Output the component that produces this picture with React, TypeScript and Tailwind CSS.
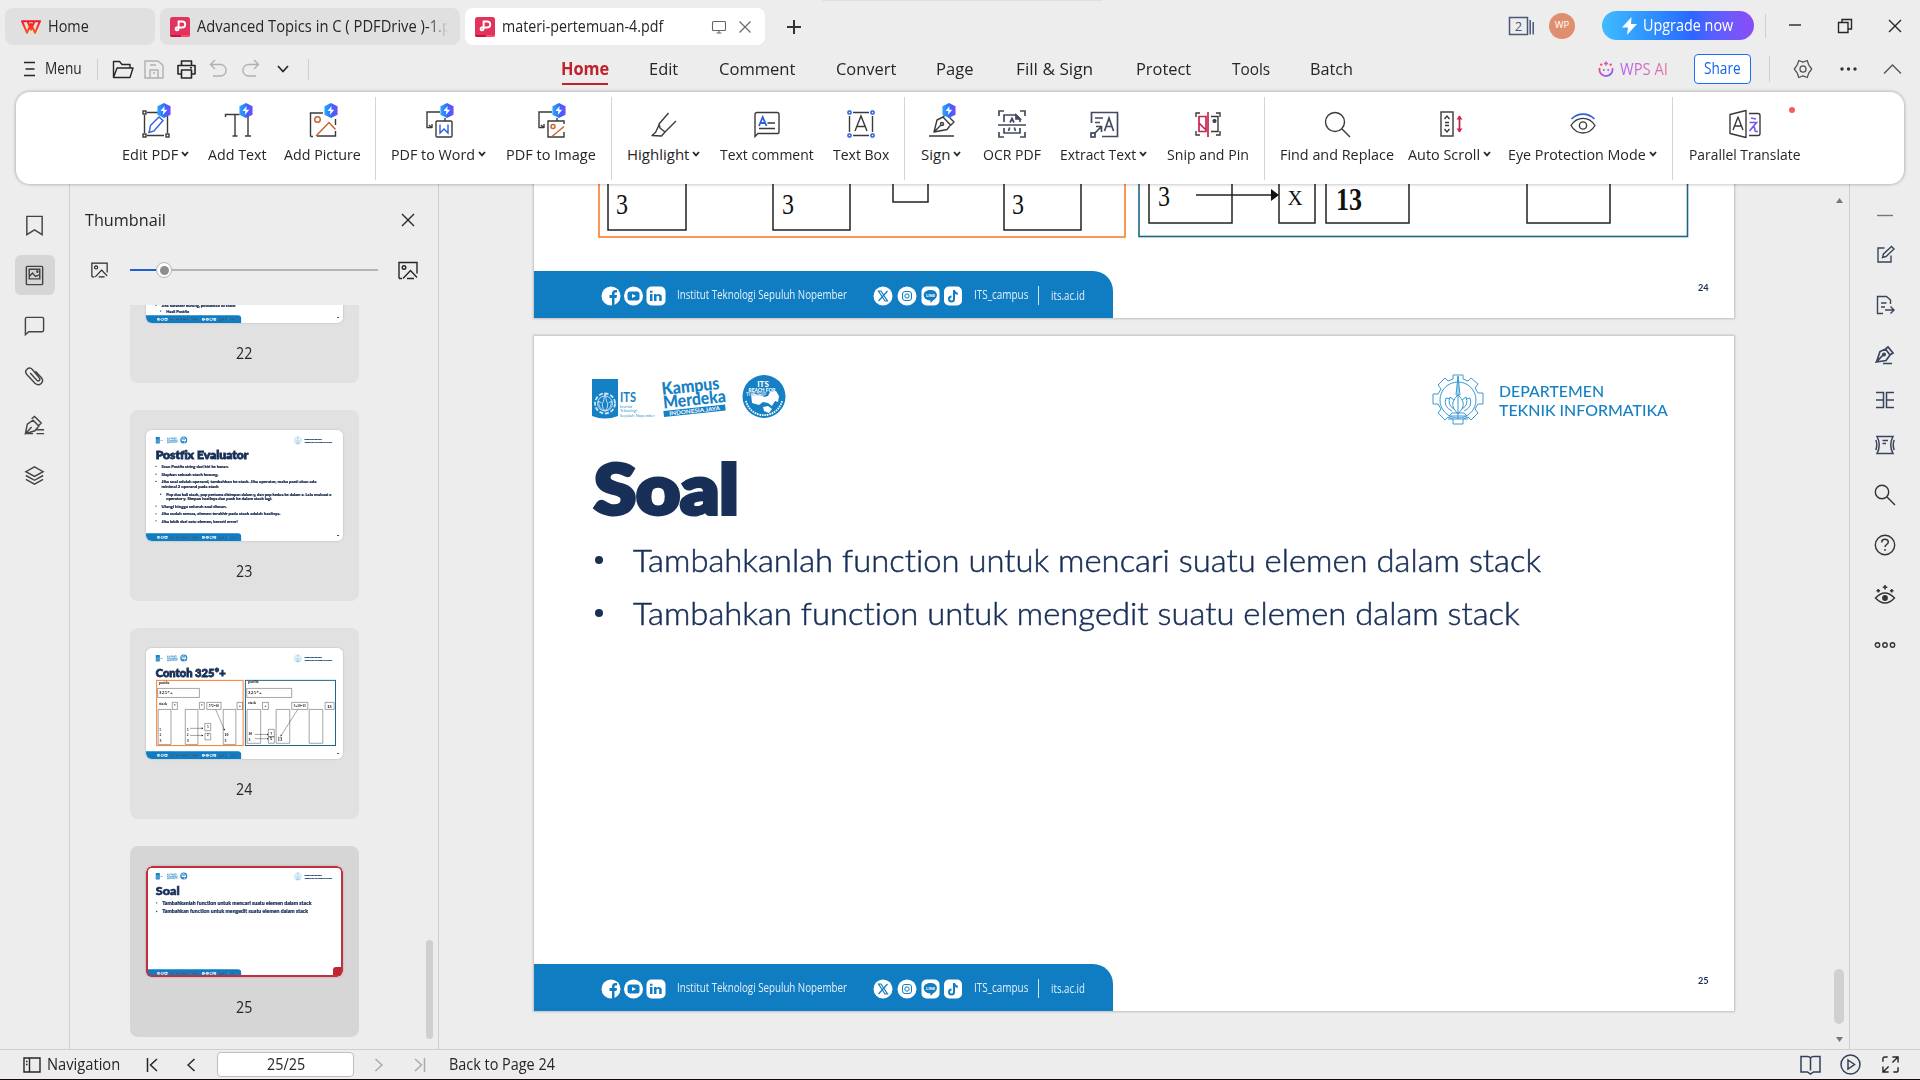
import { useLayoutEffect, useRef, type ReactNode } from 'react';

/* Text squeezed or stretched horizontally to the width given by its class. */
function Fit({ className, ink = '', children }: { className: string; ink?: string; children: ReactNode }) {
  const box = useRef<HTMLSpanElement>(null);
  const glyphs = useRef<HTMLSpanElement>(null);
  useLayoutEffect(() => {
    if (!box.current || !glyphs.current) return;
    const ratio = box.current.offsetWidth / glyphs.current.offsetWidth;
    glyphs.current.style.transform = `scaleX(${ratio})`;
  }, []);
  return (
    <span ref={box} className={`block shrink-0 whitespace-nowrap ${className}`}>
      <span ref={glyphs} className={`inline-block origin-left ${ink}`}>{children}</span>
    </span>
  );
}

function Ico({ children, className = '', box = '0 0 24 24', sw = 1.4 }: { children: ReactNode; className?: string; box?: string; sw?: number }) {
  return (
    <svg viewBox={box} fill="none" stroke="currentColor" strokeWidth={sw} className={`shrink-0 ${className}`}>
      {children}
    </svg>
  );
}

/* ---------- title bar ---------- */

function PdfBadge() {
  return (
    <svg viewBox="0 0 20 20" className="h-5 w-5 shrink-0">
      <rect width="20" height="20" rx="2.5" fill="#e2335c" />
      <path d="M0 18h11v2H2a2 2 0 0 1-2-2z" fill="#c81246" />
      <path d="M11 18h9a2 2 0 0 1-2 2h-7z" fill="#ff4b62" />
      <path d="M8.600 10.500V4.500h3.600a3 3 0 0 1 0 6H6.600a1.500 1.500 0 1 0 2 1.500v-2" fill="none" stroke="#fff" strokeWidth="1.900" />
    </svg>
  );
}

function TitleBar() {
  return (
    <div className="flex h-[52px] shrink-0 items-start pt-2 pl-[5px]">
      <div className="flex h-[37px] w-[150px] items-center rounded-lg bg-[#e0e0e0] pl-4">
        <svg viewBox="0 0 20 14" className="h-[14px] w-5 shrink-0">
          <defs>
            <linearGradient id="wps" x1="0" y1="0" x2="0" y2="1">
              <stop offset="0" stopColor="#f5142b" />
              <stop offset="1" stopColor="#ff5a12" />
            </linearGradient>
          </defs>
          <path d="M5.500 1.200H1L6 12.800 10 4l4 8.800L19 1.200h-5.500L10 9.500 6.500 1.200H13" fill="none" stroke="url(#wps)" strokeWidth="2" strokeLinejoin="round" />
        </svg>
        <Fit className="ml-[7px] w-[41px] text-[15.5px]">Home</Fit>
      </div>
      <div className="ml-[5px] flex h-[37px] w-[300px] items-center rounded-lg bg-[#e0e0e0] pl-[10px]">
        <PdfBadge />
        <div className="ml-[7px] w-[251px] overflow-hidden [mask-image:linear-gradient(to_right,#000_92%,transparent)]">
          <Fit className="w-[268px] text-[15.5px]">Advanced Topics in C ( PDFDrive )-1.pdf</Fit>
        </div>
      </div>
      <div className="ml-[5px] flex h-[37px] w-[300px] items-center rounded-lg bg-white pl-[10px]">
        <PdfBadge />
        <Fit className="ml-[7px] w-[161px] text-[15.5px]">materi-pertemuan-4.pdf</Fit>
        <Ico className="ml-[48px] h-4 w-4 text-[#666]" box="0 0 16 16" sw={1.1}>
          <path d="M2.5 2.5h11a1 1 0 0 1 1 1v7a1 1 0 0 1-1 1h-11a1 1 0 0 1-1-1v-7a1 1 0 0 1 1-1zM5.5 14h5M8 11.5V14" />
        </Ico>
        <Ico className="ml-[12px] h-3 w-3 text-[#666]" box="0 0 12 12" sw={1.1}><path d="M.5.5l11 11M11.5.5l-11 11" /></Ico>
      </div>
      <div className="ml-[21px] flex h-[37px] items-center">
        <Ico className="h-4 w-4 text-[#333]" box="0 0 16 16" sw={2}><path d="M8 1v14M1 8h14" /></Ico>
      </div>
      <div className="ml-auto flex h-[35px] items-center">
        <Ico className="h-5 w-[27px] text-[#4a5878]" box="0 0 27 20" sw={1.5}>
          <path d="M1.5 1.5h18v17h-18zM22.2 4v14.5M25.2 6v12.5" />
          <text x="10.5" y="14.8" fontSize="13" textAnchor="middle" fill="currentColor" stroke="none">2</text>
        </Ico>
        <div className="ml-[14px] flex h-[26px] w-[26px] items-center justify-center rounded-full bg-[#e08e70] text-[9.5px] text-white">WP</div>
        <div className="ml-[27px] flex h-[29px] w-[152px] items-center rounded-full bg-gradient-to-r from-[#40bcff] via-[#2c66ff] via-60% to-[#8a4cf7] pl-[20px] text-white">
          <svg viewBox="0 0 16 18" className="h-[18px] w-[16px]"><path d="M9.5 0L0 10.6h6L5 18 15 7H9z" fill="#fff" /></svg>
          <Fit className="ml-[5px] w-[90px] text-[15.5px]">Upgrade now</Fit>
        </div>
        <div className="ml-[11px] h-6 w-px bg-[#cfcfcf]" />
        <Ico className="ml-[21px] h-4 w-4" box="0 0 16 16"><path d="M2 7h12" /></Ico>
        <Ico className="ml-[34px] h-4 w-4" box="0 0 16 16"><path d="M1.5 4.5h9.500v10h-9.500zM5 4.500V1.500h9.500v9.500H11" /></Ico>
        <Ico className="mr-[18px] ml-[35px] h-[14px] w-[14px]" box="0 0 14 14"><path d="M1 1l12 12M13 1L1 13" /></Ico>
      </div>
    </div>
  );
}

/* ---------- menu row ---------- */

const menus = [
  { label: 'Edit', cls: 'ml-[40px] w-[29px]' },
  { label: 'Comment', cls: 'ml-[41px] w-[76px]' },
  { label: 'Convert', cls: 'ml-[41px] w-[60px]' },
  { label: 'Page', cls: 'ml-[40px] w-[37px]' },
  { label: 'Fill & Sign', cls: 'ml-[43px] w-[77px]' },
  { label: 'Protect', cls: 'ml-[43px] w-[55px]' },
  { label: 'Tools', cls: 'ml-[41px] w-[38px]' },
  { label: 'Batch', cls: 'ml-[40px] w-[43px]' },
];

function MenuRow() {
  return (
    <div className="mb-[6px] flex h-[34px] shrink-0 items-center pl-6">
      <Ico className="h-4 w-3" box="0 0 12 16" sw={1.5}><path d="M0 1.500h11M1.500 8h9M0 14.500h11" /></Ico>
      <Fit className="ml-[9px] w-[37px] text-[15.5px]">Menu</Fit>
      <div className="ml-[15px] h-[21px] w-px bg-[#cfcfcf]" />
      <Ico className="ml-[14px] h-[19px] w-[22px]" box="0 0 22 19"><path d="M1.500 17.500V1.500h6l2.500 3h8v3.500M1.500 17.500l3.500-9.500h16l-3 9.500z" strokeLinejoin="round" /></Ico>
      <Ico className="ml-[10px] h-[19px] w-5 text-[#b0b0b0]" box="0 0 20 19"><path d="M1 1h13l5 4.500V18H1zM6 18v-8h8v8M9 13h2M6 5h6" strokeLinejoin="round" /></Ico>
      <Ico className="ml-[13px] h-[19px] w-[19px]" box="0 0 19 19" sw={1.6}><path d="M4.500 5V1h10v4M4 14H1V5.500h17V14h-3M4.500 10h10v8h-10zM13 7.700h2" strokeLinejoin="round" /></Ico>
      <Ico className="mb-[2px] ml-[13px] h-[18px] w-[19px] text-[#b0b0b0]" box="0 0 19 18"><path d="M6 1L1.500 5.500 6 10M1.500 5.500H12a5.800 5.800 0 0 1 0 11.500H4" /></Ico>
      <Ico className="mb-[2px] ml-[13px] h-[18px] w-[19px] text-[#b0b0b0]" box="0 0 19 18"><path d="M13 1l4.500 4.500L13 10M17.500 5.500H7A5.800 5.800 0 0 0 7 17h8" /></Ico>
      <Ico className="ml-[17px] h-2 w-3" box="0 0 12 8" sw={1.7}><path d="M1 1l5 5.500L11 1" /></Ico>
      <div className="ml-[19px] h-[21px] w-px bg-[#cfcfcf]" />
      <div className="ml-[252px] flex h-[32px] flex-col items-center pt-[4px] font-bold text-[#c0202e]">
        <Fit className="w-[48px] text-[17px] leading-6">Home</Fit>
        <div className="mt-[2px] h-[2px] w-[46px] shrink-0 bg-[#c0202e]" />
      </div>
      {menus.map((m) => (
        <Fit key={m.label} className={`text-[17px] ${m.cls}`}>{m.label}</Fit>
      ))}
      <div className="ml-auto flex items-center">
        <svg viewBox="0 0 16 17" className="h-[17px] w-4" fill="none">
          <defs>
            <linearGradient id="ai" x1="0" y1="0" x2="1" y2="1">
              <stop offset="0" stopColor="#f0495e" />
              <stop offset=".5" stopColor="#b659e8" />
              <stop offset="1" stopColor="#6c5cf0" />
            </linearGradient>
          </defs>
          <path d="M1.700 7a6.500 6.500 0 1 0 12.600 0" stroke="url(#ai)" strokeWidth="1.800" />
          <path d="M5.800 8v2M10.200 8v2M8 .5v4M6 2.500h4" stroke="#c657cf" strokeWidth="1.500" />
          <circle cx="3.200" cy="3.600" r="1.200" fill="#f0495e" />
          <circle cx="12.600" cy="3.600" r="1.200" fill="#f0495e" />
        </svg>
        <Fit className="ml-[6px] w-[48px] text-[16px]" ink="bg-gradient-to-r from-[#b35ff0] to-[#ee6aa0] bg-clip-text text-transparent">WPS AI</Fit>
        <div className="ml-[26px] flex h-[30px] w-[57px] items-center justify-center rounded border border-[#1a6dff] bg-white text-[#1463f3]">
          <Fit className="w-[37px] text-[15.5px]">Share</Fit>
        </div>
        <div className="ml-[18px] h-[26px] w-px bg-[#cfcfcf]" />
        <Ico className="ml-[23px] h-5 w-5 text-[#555]" box="0 0 20 20" sw={1.3}>
          <path d="M5.800 1.500L10 3.200l4.200-1.700 1.500 4.300 3 4.200-3 4.200-1.500 4.300L10 16.800l-4.200 1.700-1.500-4.300-3-4.200 3-4.200z" strokeLinejoin="round" />
          <ellipse cx="10" cy="10" rx="3" ry="3.200" />
        </Ico>
        <svg viewBox="0 0 17 4" className="ml-[27px] h-1 w-[17px]" fill="#333"><circle cx="2" cy="2" r="1.700" /><circle cx="8.500" cy="2" r="1.700" /><circle cx="15" cy="2" r="1.700" /></svg>
        <Ico className="mr-[18px] ml-[26px] h-[10px] w-[19px] text-[#555]" box="0 0 19 10"><path d="M1 9.500L9.500 1 18 9.500" /></Ico>
      </div>
    </div>
  );
}

/* ---------- ribbon ---------- */

const orange = '#c9602a';
const blue = '#2f5fe0';

function FlashBadge() {
  return (
    <svg viewBox="0 0 16 16" className="absolute -top-[7px] left-[14px] h-[15px] w-4">
      <defs>
        <linearGradient id="hex" x1="0" y1="0" x2="1" y2="0">
          <stop offset="0" stopColor="#2ba6ff" />
          <stop offset=".6" stopColor="#3466ff" />
          <stop offset="1" stopColor="#8148f5" />
        </linearGradient>
      </defs>
      <path d="M8 0l7 3.500v9L8 16l-7-3.500v-9z" fill="url(#hex)" />
      <path d="M8.600 3.200L4.300 8.600h3l-.6 4.200 4.800-5.600H8.300z" fill="#fff" />
    </svg>
  );
}

type Tool = { label: string; cls: string; icon: ReactNode; menu?: boolean; flash?: boolean };

const groups: { sep: string; tools: Tool[] }[] = [
  {
    sep: 'ml-[14px]',
    tools: [
      {
        label: 'Edit PDF', cls: 'ml-[106px] w-[56px]', menu: true, flash: true,
        icon: <><path d="M5 2.500h15M5 25.500h17M2.500 5v18M25.500 5v18" /><rect x="1" y="1" width="3" height="3" /><rect x="1" y="24" width="3" height="3" /><rect x="24" y="24" width="3" height="3" /><path d="M8.500 15.500L17 7l4 3.500-9 10.500-5 1.500z" stroke={blue} /></>,
      },
      {
        label: 'Add Text', cls: 'ml-[19px] w-[59px]', flash: true,
        icon: <path d="M1.500 7V4.500h14M11 4.500V26M8.500 26h5M24 6v20M21 26h6" />,
      },
      {
        label: 'Add Picture', cls: 'ml-[17px] w-[77px]', flash: true,
        icon: <><path d="M14 3H1.500v23.500M8 26h18.500v-5M26.500 15V9M1.500 26.500H4" /><circle cx="8.500" cy="9.500" r="2.800" stroke={orange} /><path d="M7 26L20 12.500l6.500 7" stroke={orange} /></>,
      },
    ],
  },
  {
    sep: 'ml-[15px]',
    tools: [
      {
        label: 'PDF to Word', cls: 'ml-[15px] w-[84px]', menu: true, flash: true,
        icon: <><path d="M15 2H2v15.500h4M20 8v3M4 15l3 3M7 14v4" /><rect x="11" y="11" width="16" height="16" rx="1" /><path d="M15 14.500V23l4-4 4 4v-8.500" stroke={blue} /></>,
      },
      {
        label: 'PDF to Image', cls: 'ml-[20px] w-[90px]', flash: true,
        icon: <><path d="M15 2H2v15.500h4M20 8v3M4 15l3 3M7 14v4M27 22v5H11V11h16v3" /><circle cx="16" cy="16.500" r="2" stroke={orange} /><path d="M15 26.500L27 16.500" stroke={orange} /></>,
      },
    ],
  },
  {
    sep: 'ml-[15px]',
    tools: [
      {
        label: 'Highlight', cls: 'ml-[15px] w-[62px]', menu: true,
        icon: <path d="M18.500 3L9 14l1 4 5 4L26 11M9 15l-3.500 7.500L2 25.500l9.500.5 3.500-4" strokeLinejoin="round" />,
      },
      {
        label: 'Text comment', cls: 'ml-[20px] w-[94px]',
        icon: <><path d="M2 26.500V4.500a2 2 0 0 1 2-2h20a2 2 0 0 1 2 2v18a1 1 0 0 1-1 1H5zM14.500 13H22M6 18.500h16" /><path d="M6 16L9.700 7 13.500 16M7.300 13h5" stroke={blue} strokeWidth="1.800" /></>,
      },
      {
        label: 'Text Box', cls: 'ml-[19px] w-[56px]',
        icon: <><path d="M6 2.500h16M6 25.500h16M2.500 6v16M25.500 6v16M8 21l6-15 6 15M10 16.500h8" /><g stroke={blue} strokeWidth="1.600"><rect x="1" y="1" width="3" height="3" rx="1" /><rect x="24" y="1" width="3" height="3" rx="1" /><rect x="1" y="24" width="3" height="3" rx="1" /><rect x="24" y="24" width="3" height="3" rx="1" /></g></>,
      },
    ],
  },
  {
    sep: 'ml-[15px]',
    tools: [
      {
        label: 'Sign', cls: 'ml-[16px] w-[29px]', menu: true, flash: true,
        icon: <><path d="M2 26h25M7 22l3-12 6-3 7.500 8-3.500 4.500L7 22l7-7M16 7l3-3 8 8-3 3" strokeLinejoin="round" /><circle cx="15" cy="14" r="1.500" /></>,
      },
      {
        label: 'OCR PDF', cls: 'ml-[22px] w-[58px]',
        icon: <g stroke="#414a61" strokeWidth="1.700"><path d="M1 6V1h5M22 1h5v5M27 22v5h-5M6 27H1v-5M0 15h28M6 12V5h12l4 4v3M6 18v5h16v-5M10.500 21l1.200-3.500M17.500 21l-1.200-3.500M12 12.500l2-4 2 4" /><path d="M18 5v4h4z" fill="#414a61" /></g>,
      },
      {
        label: 'Extract Text', cls: 'ml-[19px] w-[76px]', menu: true,
        icon: <g stroke="#414a61" strokeWidth="1.700"><path d="M1.500 13V2.500h26v24H12M5 8h8M5 12.500h5M14.500 21l4.500-13 4.500 13M16 16.500h6M4 24l7-7M6 16.500h5.500V22" /><rect x="1" y="23" width="4" height="4" /></g>,
      },
      {
        label: 'Snip and Pin', cls: 'ml-[20px] w-[82px]',
        icon: <><path d="M2 7V3h4M22 3h4v4M26 21v4h-4M6 25H2v-4M17 6.500h7v15h-7" /><circle cx="20.500" cy="11" r="1.400" fill="#555" /><path d="M14 2v25M12 6.500H5v15h7zM5 13l7 7" stroke="#c8254e" strokeWidth="1.700" /></>,
      },
    ],
  },
  {
    sep: 'ml-[15px]',
    tools: [
      {
        label: 'Find and Replace', cls: 'ml-[15px] w-[114px]',
        icon: <><circle cx="12" cy="12" r="9.500" /><path d="M19 19l8 8" /></>,
      },
      {
        label: 'Auto Scroll', cls: 'ml-[14px] w-[72px]', menu: true,
        icon: <><rect x="5" y="2" width="12" height="24" /><path d="M8.500 9L11 6l2.500 3M8.500 19l2.500 3 2.500-3M9 12.500h4M9 15.500h4" /><path d="M23.500 6v16" stroke="#c8254e" strokeWidth="1.800" /><path d="M20.500 9.500l3-4 3 4zM20.500 18.500l3 4 3-4z" fill="#c8254e" stroke="none" /></>,
      },
      {
        label: 'Eye Protection Mode', cls: 'ml-[17px] w-[138px]', menu: true,
        icon: <><path d="M2 15.500C8 6 20 6 26 15.500 20 25.500 8 25.500 2 15.500z" strokeLinejoin="round" /><circle cx="14" cy="15.500" r="3.600" /><path d="M2.500 9C9 2.500 19 2.500 25.500 9" stroke={blue} strokeWidth="1.700" /></>,
      },
    ],
  },
  {
    sep: 'ml-[16px]',
    tools: [
      {
        label: 'Parallel Translate', cls: 'ml-[16px] w-[111px]',
        icon: <><path d="M-1 4.500l16-4v27l-16-4zM18 3.500h9a2 2 0 0 1 2 2v18a2 2 0 0 1-2 2h-9M2 20L7 7l5 13M4 16h6" strokeLinejoin="round" /><path d="M20 8l5 1M18.500 12.500h7l-7 8.500M21.500 17c3-1 2 4 3 4.500h2.500" stroke="#7a55f0" strokeWidth="1.700" /></>,
      },
    ],
  },
];

function Ribbon() {
  return (
    <div className="relative z-10 mx-4 flex h-[92px] shrink-0 items-start rounded-[14px] bg-white shadow-[0_0_3px_1px_rgba(0,0,0,0.22)]">
      {groups.map((g, gi) => (
        <div key={g.sep + g.tools[0].label} className="flex h-full items-start">
          {g.tools.map((t) => {
            const [gap, width] = t.cls.split(' ');
            return (
              <div key={t.label} className={`flex flex-col items-center pt-[18px] ${gap}`}>
                <div className="relative h-7 w-7">
                  <Ico className="h-7 w-7 overflow-visible text-[#3a3a3a]" box="0 0 28 28">{t.icon}</Ico>
                  {t.flash && <FlashBadge />}
                </div>
                <div className="mt-[5px] flex items-center">
                  <Fit className={`text-[15px] leading-[22px] ${width}`}>{t.label}</Fit>
                  {t.menu && <Ico className="ml-[3px] h-[6px] w-2" box="0 0 8 6" sw={1.8}><path d="M1 1l3 3.300L7 1" /></Ico>}
                </div>
              </div>
            );
          })}
          {gi < groups.length - 1 && <div className={`mt-[5px] h-[83px] w-px bg-[#d4d4d4] ${g.sep}`} />}
        </div>
      ))}
      <div className="absolute top-[15px] right-[109px] h-[6px] w-[6px] rounded-full bg-[#f0605e]" />
    </div>
  );
}

/* ---------- slides (1200 x 675) ---------- */

function SlideLogos() {
  return (
    <div className="flex h-[54px] items-start justify-between pr-[66px] pl-[58px]">
      <svg viewBox="0 0 196 54" className="h-[54px] w-[196px]" fontFamily="Lato, sans-serif">
        <path d="M0 7h26v37q-13 5-26 0z" fill="#1580c4" />
        <g stroke="#cfe6f5" fill="none" strokeWidth=".9">
          <circle cx="13" cy="31.500" r="10" strokeDasharray="4 1.800" strokeWidth="1.800" />
          <circle cx="13" cy="31.500" r="7.500" />
          <path d="M13 21l-1.500 8q-3 5 1.500 10 4.500-5 1.500-10zM6.500 29q0 8 6.500 10 6.500-2 6.500-10l-3 2M6.500 29l3 2" />
        </g>
        <g fill="#1580c4">
          <text x="28" y="30" fontSize="13" fontWeight="700" textLength="16" lengthAdjust="spacingAndGlyphs">ITS</text>
          <text x="28" y="35.500" fontSize="4" opacity=".8">Institut</text>
          <text x="28" y="40" fontSize="4" opacity=".8">Teknologi</text>
          <text x="28" y="44.500" fontSize="4" opacity=".8" textLength="35">Sepuluh Nopember</text>
          <g transform="rotate(-6 72 40)" fontWeight="900" fontSize="17.500">
            <text x="72" y="23" textLength="58" lengthAdjust="spacingAndGlyphs">Kampus</text>
            <text x="72" y="36.500" textLength="63" lengthAdjust="spacingAndGlyphs">Merdeka</text>
            <rect x="71.500" y="39" width="62" height="6" />
            <text x="77" y="44" fontSize="5.600" fontWeight="700" fill="#fff" textLength="51" lengthAdjust="spacingAndGlyphs">INDONESIA JAYA</text>
          </g>
          <circle cx="172" cy="24.500" r="21.500" />
        </g>
        <path d="M159 22q3-2 6 1l4-1 3 3 4-1 2-4 6-1 3 5-1 6-3-1-3 5-4-3-5-1-4 3-7-2zM171 35l5-1 4 3-3 4-5-2z" fill="#fff" />
        <path d="M154 29a18.500 18.500 0 0 0 36 0" fill="none" stroke="#fff" strokeWidth="1.800" strokeDasharray="1.600 .9" />
        <g fill="#fff" textAnchor="middle" fontWeight="900">
          <text x="171" y="14.500" fontSize="8">ITS</text>
          <text x="170" y="19.500" fontSize="4.800">REACH FOR</text>
          <text x="164" y="24" fontSize="4.800" stroke="#1580c4" strokeWidth=".2">THE TOP</text>
        </g>
      </svg>
      <div className="flex h-[56px] items-center">
        <svg viewBox="0 0 52 52" className="h-[52px] w-[52px]" fill="none" stroke="#3a9ad4" strokeWidth="1">
          <path d="M21 5V1h10v4l5 2 3-3 7 6-3 4 3 5h5v11h-5l-3 5 3 4-7 7-3-3-5 2v5H21v-5l-5-2-3 3-7-7 3-4-3-5H1V20h5l3-5-3-4 7-7 3 3z" />
          <circle cx="26" cy="26" r="18" />
          <path d="M26 2l-2 19h4zM26 3v42M26 21q-8 7-4 14l4 5 4-5q4-7-4-14zM22 35q-7-4-4-12l4 3M30 35q7-4 4-12l-4 3M20 37q-9-4-6-13l4 1M32 37q9-4 6-13l-4 1M17 42h18l-3-3H20zM16 45h20" />
        </svg>
        <div className="ml-[15px] font-['Lato'] text-[16px] leading-[19.500px] font-medium text-[#1580c4]">
          <Fit className="w-[105px]">DEPARTEMEN</Fit>
          <Fit className="w-[169px]">TEKNIK INFORMATIKA</Fit>
        </div>
      </div>
    </div>
  );
}

function SlideFooter({ page }: { page: number }) {
  return (
    <div className="mt-auto flex h-[47px] shrink-0 items-start">
      <div className="flex h-[47px] w-[579px] items-center rounded-tr-[20px] bg-[#107cc1] pt-[2px] pl-[67px] font-['Open_Sans'] text-[12.500px] text-[#e4f1fa]">
        <svg viewBox="0 0 66 20" className="h-5 w-[66px] shrink-0" fill="#fff">
          <circle cx="10" cy="10" r="9.500" />
          <path d="M11 20v-8H8.500V9H11V7.500Q11 4 14.500 4H16v2.600h-1.500q-1 0-1 1.200V9H16l-.5 3h-2v8" fill="#107cc1" />
          <circle cx="32.500" cy="10" r="9.500" />
          <rect x="26.500" y="5.500" width="12" height="9" rx="2.500" fill="#107cc1" />
          <path d="M31 8l4 2-4 2z" />
          <rect x="45.500" y=".5" width="19" height="19" rx="5" />
          <path d="M49 8h2.500v7H49zM49 4.700h2.500v2H49zM53 8h2.400v1q3-2.500 5.300.7V15h-2.500v-4.500q-1.400-1.700-2.700 0V15H53z" fill="#107cc1" />
        </svg>
        <Fit className="ml-[10px] w-[170px]">Institut Teknologi Sepuluh Nopember</Fit>
        <svg viewBox="0 0 90 20" className="ml-[26px] h-5 w-[90px] shrink-0" fill="#fff">
          <circle cx="10" cy="10" r="9.500" />
          <path d="M5.500 5h2.500l6.500 10H12zM14.500 5l-9 10" fill="none" stroke="#107cc1" strokeWidth="1.200" />
          <circle cx="34" cy="10" r="9.500" />
          <g fill="none" stroke="#107cc1"><rect x="29.500" y="5.500" width="9" height="9" rx="2.500" /><circle cx="34" cy="10" r="2.200" /></g>
          <rect x="48.500" y=".5" width="18" height="19" rx="5" />
          <path d="M57.500 4c8 0 8 8 3 10l-3 3v-2.500c-9-.5-9-10.500 0-10.500z" fill="#107cc1" />
          <text x="57.500" y="11" fontSize="4" fontWeight="700" textAnchor="middle">LINE</text>
          <rect x="71" y=".5" width="18" height="19" rx="5" />
          <path d="M81 4v9a2.500 2.500 0 1 1-2.500-2.500M81 4.500q.8 3 3.800 3.300" fill="none" stroke="#107cc1" strokeWidth="2" />
        </svg>
        <Fit className="ml-[11px] w-[54px]">ITS_campus</Fit>
        <div className="ml-[10px] h-[19px] w-px bg-[#cfe6f5]" />
        <Fit className="mt-[2px] ml-[12px] w-[34px]">its.ac.id</Fit>
      </div>
      <Fit className="mt-[8px] mr-[25px] ml-auto w-[11px] font-['Lato'] text-[10px] leading-4 font-bold text-[#182f57]">{page}</Fit>
    </div>
  );
}

function StackDiagram({ thumb }: { thumb?: boolean }) {
  const frame = thumb ? 6 : 1.6;
  return (
    <svg viewBox="0 0 1200 675" className="absolute inset-0 h-full w-full" fill="none" stroke="#222" strokeWidth={thumb ? 2.5 : 1.5} fontFamily="Liberation Serif, serif">
      <rect x="65" y="197" width="526" height="397" stroke="#fa7d28" strokeWidth={frame} />
      <rect x="605" y="197" width="548.500" height="396.500" stroke="#1f6388" strokeWidth={frame} />
      <path d="M71 246h254v55H71zM74 374h78v213H74zM239 374h77v213h-77zM470 374h77v213h-77zM160 331h31v43h-31zM325 331h30v43h-30zM370 331h87v43h-87zM554 331h34v43h-34zM358 459h36v45h-36zM359 520h35v39h-35z" />
      <path d="M613 246h274v55H613zM615 374h83v206h-83zM792 374h83v206h-83zM993 374h83v206h-83zM709 331h36v43h-36zM887 331h98v43h-98zM1090 331h55v43h-55zM745 495h36v45h-36zM745 540h36v40h-36z" />
      <path d="M268 489h76M268 532h76M424 374l52 122M924 374L824 530M662 526h76M662 552h76" />
      <g fill="#111" stroke="none">
        <path d="M339 483l10 6-10 6zM339 526l10 6-10 6zM481 504l-12-9 10-4zM818 540l2-14 8 5zM737 520l8 6-8 6zM737 546l8 6-8 6z" />
        <g fontSize="30">
          <text x="82" y="503" textLength="11" lengthAdjust="spacingAndGlyphs">5</text>
          <text x="82" y="538" textLength="11" lengthAdjust="spacingAndGlyphs">2</text>
          <text x="82" y="571" textLength="12" lengthAdjust="spacingAndGlyphs">3</text>
          <text x="248" y="503" textLength="11" lengthAdjust="spacingAndGlyphs">5</text>
          <text x="248" y="538" textLength="11" lengthAdjust="spacingAndGlyphs">2</text>
          <text x="248" y="571" textLength="12" lengthAdjust="spacingAndGlyphs">3</text>
          <text x="478" y="538" textLength="24" lengthAdjust="spacingAndGlyphs">10</text>
          <text x="478" y="571" textLength="12" lengthAdjust="spacingAndGlyphs">3</text>
          <text x="623" y="530" textLength="24" lengthAdjust="spacingAndGlyphs">10</text>
          <text x="624" y="563" textLength="12" lengthAdjust="spacingAndGlyphs">3</text>
          <text x="802" y="567" fontSize="32" fontWeight="700" textLength="26" lengthAdjust="spacingAndGlyphs">13</text>
          <text x="79" y="282" textLength="84">325*+</text>
          <text x="621" y="278" textLength="84">325*+</text>
          <text x="1101" y="363" fontWeight="700">13</text>
        </g>
        <g fontSize="22" fontWeight="700">
          <text x="79" y="217">postfix</text>
          <text x="79" y="346">stack</text>
          <text x="621" y="214">postfix</text>
          <text x="621" y="340">stack</text>
        </g>
        <g fontSize="20" textAnchor="middle">
          <text x="175" y="358">*</text>
          <text x="340" y="358">*</text>
          <text x="413" y="358">5*2=10</text>
          <text x="571" y="358">+</text>
          <text x="376" y="489">5</text>
          <text x="376" y="538">2</text>
          <text x="727" y="358">+</text>
          <text x="936" y="358">3+10=13</text>
          <text x="763" y="524">y</text>
          <text x="761" y="562" fontSize="21">X</text>
        </g>
      </g>
    </svg>
  );
}

function Bullet({ children }: { children: ReactNode }) {
  return (
    <div className="flex items-center">
      <div className="mr-[30px] h-2 w-2 shrink-0 rounded-full bg-[#182f57]" />
      {children}
    </div>
  );
}

function Slide({ page, thumb }: { page: number; thumb?: boolean }) {
  return (
    <div className={`relative flex h-[675px] w-[1200px] flex-col bg-white pt-[36px] font-['Lato'] text-[#182f57] [font-variant-ligatures:none] ${thumb ? 'font-bold [-webkit-text-stroke:1.5px_#182f57]' : ''}`}>
      <SlideLogos />
      {page === 25 && (
        <>
          <div className="mt-[20px] pl-[60px] text-[68px] leading-[84px] font-black [-webkit-text-stroke:4px_#182f57]">
            <Fit className="w-[145px]">Soal</Fit>
          </div>
          <div className={`mt-[6px] flex flex-col gap-[5px] pl-[61px] text-[31.500px] leading-[48px] ${thumb ? '' : 'font-light [-webkit-text-stroke:0.500px_#182f57]'}`}>
            <Bullet><Fit className="w-[908px]">Tambahkanlah function untuk mencari suatu elemen dalam stack</Fit></Bullet>
            <Bullet><Fit className="w-[887px]">Tambahkan function untuk mengedit suatu elemen dalam stack</Fit></Bullet>
          </div>
        </>
      )}
      {page === 24 && (
        <>
          <div className="mt-[20px] pl-[59px] text-[66px] leading-[84px] font-black [-webkit-text-stroke:5px_#182f57]">
            <Fit className="w-[426px]">Contoh 325*+</Fit>
          </div>
          <div className="[-webkit-text-stroke:0px]"><StackDiagram thumb={thumb} /></div>
        </>
      )}
      {page === 23 && (
        <>
          <div className="mt-[18px] pl-[59px] text-[66px] leading-[84px] font-black [-webkit-text-stroke:5px_#182f57]">
            <Fit className="w-[564px]">Postfix Evaluator</Fit>
          </div>
          <div className="mt-[14px] flex flex-col pl-[57px] text-[26px] leading-[30px] text-[#101c38]">
            <Bullet><Fit className="w-[408px]">Scan Postfix string dari kiri ke kanan.</Fit></Bullet>
            <div className="mt-[18px]"><Bullet><Fit className="w-[347px]">Siapkan sebuah stack kosong.</Fit></Bullet></div>
            <div className="mt-[14px]"><Bullet><Fit className="w-[942px]">Jika soal adalah operand, tambahkan ke stack. Jika operator, maka pasti akan ada</Fit></Bullet></div>
            <Fit className="ml-[38px] w-[347px]">minimal 2 operand pada stack</Fit>
            <div className="mt-[20px] ml-[28px] text-[24px] leading-[26px]">
              <Bullet><Fit className="w-[1006px]">Pop dua kali stack, pop pertama disimpan dalam y, dan pop kedua ke dalam x. Lalu evaluasi x</Fit></Bullet>
              <Fit className="ml-[38px] w-[646px]">operator y. Simpan hasilnya dan push ke dalam stack lagi.</Fit>
            </div>
            <div className="mt-[18px]"><Bullet><Fit className="w-[396px]">Ulangi hingga seluruh soal discan.</Fit></Bullet></div>
            <div className="mt-[17px]"><Bullet><Fit className="w-[724px]">Jika sudah semua, elemen terakhir pada stack adalah hasilnya.</Fit></Bullet></div>
            <div className="mt-[13px]"><Bullet><Fit className="w-[463px]">Jika lebih dari satu elemen, berarti error!</Fit></Bullet></div>
          </div>
        </>
      )}
      {page === 22 && (
        <div className="mt-auto mb-[10px] flex flex-col gap-[6px] pl-[57px] text-[26px] leading-[30px] text-[#101c38]">
          <Bullet><Fit className="w-[450px]">Jika karakter kurung, pindahkan isi stack</Fit></Bullet>
          <div className="ml-[28px]"><Bullet><Fit className="w-[140px]">Hasil Postfix</Fit></Bullet></div>
        </div>
      )}
      {page === 22 ? <div className="flex flex-col"><SlideFooter page={page} /></div> : <SlideFooter page={page} />}
    </div>
  );
}

/* ---------- left side ---------- */

function LeftRail() {
  const icons: { name: string; art: ReactNode }[] = [
    { name: 'bookmark', art: <path d="M4 2.500h16v19l-8-5-8 5z" /> },
    { name: 'thumbs', art: <><rect x="3.500" y="2.500" width="17" height="19" rx="1" /><path d="M6.500 5.500h11v10h-11zM6.500 13l3.500-3.500 3 3.500 4.500-2" /><circle cx="15" cy="8" r=".6" /></> },
    { name: 'comment', art: <path d="M2.500 21.500V5a1.500 1.500 0 0 1 1.500-1.500h16A1.500 1.500 0 0 1 21.500 5v12a1.500 1.500 0 0 1-1.500 1.500H6z" /> },
    { name: 'clip', art: <path d="M7.500 9.500l7 7.500c1.800 1.800 4.200-.6 2.500-2.500L10 6C6 1.800.5 7 4 11l8.500 9c4.500 4.200 10.500-1.500 6.500-6L13 7.500" /> },
    { name: 'pen', art: <path d="M2.500 20.500h8M2.500 20.500l2-10 6-4 6 6-4 5zM2.500 20.500l6.500-7M9 5l3-2.500 7 7L16.500 12M14 16.500h8M14 20.500h8" /> },
    { name: 'layers', art: <path d="M12 3l9 5-9 5-9-5zM3 12l9 5 9-5M3 16l9 5 9-5" /> },
  ];
  return (
    <div className="flex w-[70px] shrink-0 flex-col items-center gap-[10px] border-r border-[#cfcfcf] pt-[21px]">
      {icons.map((i) => (
        <div key={i.name} className={`flex h-10 w-10 items-center justify-center rounded-md ${i.name === 'thumbs' ? 'bg-[#d6d6d6]' : ''}`}>
          <Ico className="h-[23px] w-[23px] text-[#444]" sw={1.500}>{i.art}</Ico>
        </div>
      ))}
    </div>
  );
}

function PictureIcon({ className }: { className: string }) {
  return (
    <Ico className={className} box="0 0 20 18" sw={1.400}>
      <path d="M1 17V1h18v11M1 17h3M9 17h7M5 17l7.500-8L19 16" />
      <circle cx="6" cy="6" r="1.800" />
    </Ico>
  );
}

function ThumbnailPanel() {
  return (
    <div className="flex w-[369px] shrink-0 flex-col border-r border-[#cfcfcf]">
      <div className="flex h-9 items-center pt-[36px] pl-[15px]">
        <Fit className="w-[81px] text-[17px] leading-6">Thumbnail</Fit>
        <Ico className="mr-[23px] ml-auto h-[14px] w-[14px]" box="0 0 14 14"><path d="M1 1l12 12M13 1L1 13" /></Ico>
      </div>
      <div className="mt-[38px] flex h-[24px] items-center pl-[21px]">
        <PictureIcon className="h-[16px] w-[17px]" />
        <div className="relative ml-[22px] flex w-[248px] items-center">
          <div className="h-[2px] w-[30px] bg-[#1f5fd0]" />
          <div className="h-[2px] flex-1 bg-[#b4b4b4]" />
          <div className="absolute left-[26px] flex h-4 w-4 items-center justify-center rounded-full border border-[#b5b5b5] bg-white">
            <div className="h-[9px] w-[9px] rounded-full bg-[#8d8d8d]" />
          </div>
        </div>
        <PictureIcon className="ml-[20px] h-[19px] w-5" />
      </div>
      <div className="mt-[23px] flex min-h-0 flex-1">
        <div className="ml-[60px] flex w-[229px] flex-col justify-end gap-[27px] overflow-hidden pb-[12px]">
          {[22, 23, 24, 25].map((n) => (
            <div key={n} className={`flex h-[191px] shrink-0 flex-col items-center rounded-lg pt-[20px] ${n === 25 ? 'bg-[#d6d6d6]' : 'bg-[#e1e1e1]'}`}>
              <div className="relative h-[111px] w-[197px] overflow-hidden rounded-md bg-white shadow-[0_0_2px_rgba(0,0,0,0.25)]">
                <div className="h-[675px] w-[1200px] origin-top-left scale-[0.1643]">
                  <Slide page={n} thumb />
                </div>
                {n === 25 && (
                  <div className="absolute inset-0 flex items-end justify-end rounded-md border-2 border-[#c22f3e]">
                    <div className="h-[8px] w-[8px] rounded-tl-[3px] bg-[#c0262f]" />
                  </div>
                )}
              </div>
              <Fit className="mt-[18px] mr-[2px] w-4 text-[16px] leading-6">{n}</Fit>
            </div>
          ))}
        </div>
        <div className="mt-auto mr-[5px] mb-[10px] ml-auto h-[99px] w-[7px] rounded-full bg-[#cfcfcf]" />
      </div>
    </div>
  );
}

/* ---------- right rail ---------- */

function RightRail() {
  return (
    <div className="flex w-[71px] shrink-0 flex-col items-center border-l border-[#cfcfcf] pt-[21px] text-[#39445c]">
      <Ico className="h-5 w-5 text-[#777]" box="0 0 20 20"><path d="M2 10.500h16" /></Ico>
      <Ico className="mt-[20px] h-5 w-5" box="0 0 20 20"><path d="M9.500 3H3v14h13v-6.500M7.500 12.500l1-3.500L16.500 1.500 19 4l-8 7.500z" /></Ico>
      <Ico className="mt-[30px] h-5 w-5" box="0 0 20 20"><path d="M8 18.500H2.500v-17h9L15.500 5v4M6 8h5.500M6 12h4M10 15h9M15.500 11.500L19 15l-3.500 3.500" /></Ico>
      <Ico className="mt-[30px] h-5 w-5" box="0 0 20 20"><path d="M1.500 17L5 6.500l5.500-2.500L15 10l-4 5.500L1.500 17l7-7.500M11 3.500L13 2l5 6-2.500 1.500M8 18.500h9" strokeWidth="1.700" /><circle cx="9" cy="9.500" r="1.300" fill="currentColor" /></Ico>
      <Ico className="mt-[25px] h-5 w-5" box="0 0 20 20" sw={1.500}><path d="M1 2.500h7.500v15H1M1 10h7.500M19 2.500h-7.500v15H19M11.500 10H19" /></Ico>
      <Ico className="mt-[25px] h-5 w-5" box="0 0 20 20" sw={1.500}><path d="M2 1.500h16Q13.500 10 18 18.500H2Q6.500 10 2 1.500zM7.500 5.500h5.500M7.500 8.500h3.500M.8 5q2 5 0 10M19.200 5q-2 5 0 10" /></Ico>
      <Ico className="mt-[29px] h-[22px] w-[22px] text-[#333]" box="0 0 22 22"><circle cx="8" cy="8" r="6.700" /><path d="M13 13l8 8" /></Ico>
      <Ico className="mt-[28px] h-[22px] w-[22px] text-[#333]" box="0 0 22 22"><circle cx="11" cy="11" r="9.700" /><path d="M7.700 8.500c0-4.500 6.600-4.300 6.600-.5 0 2.500-3.300 2.500-3.300 5M11 15v1.800" strokeWidth="1.500" /></Ico>
      <Ico className="mt-[28px] h-[22px] w-[22px] text-[#333]" box="0 0 22 22"><path d="M1.500 14q9.500-10 19 0-9.500 10-19 0z" /><path d="M11 1v4.500M8.800 3.200h4.500M4.300 5v3.600M2.500 6.800h3.600M17.700 5v3.600M15.900 6.800h3.600" strokeWidth="1.600" /><circle cx="11" cy="14" r="2.200" fill="currentColor" /></Ico>
      <Ico className="mt-[28px] h-[22px] w-[22px] text-[#333]" box="0 0 22 22"><circle cx="3.500" cy="11" r="2.200" /><circle cx="11" cy="11" r="2.200" /><circle cx="18.500" cy="11" r="2.200" /></Ico>
    </div>
  );
}

/* ---------- status bar ---------- */

function StatusBar() {
  return (
    <div className="flex h-[31px] shrink-0 items-center border-t border-b border-t-[#cfcfcf] border-b-[#16060c] pl-[23px]">
      <Ico className="h-4 w-[18px]" box="0 0 18 16"><path d="M1 1h16v14H1zM6.500 1v14M3 4.500h1.500M3 7.500h1.500" /></Ico>
      <Fit className="ml-[6px] w-[73px] text-[15.500px]">Navigation</Fit>
      <Ico className="ml-[26px] h-[14px] w-3" box="0 0 12 14" sw={1.500}><path d="M1.500 0v14M11 1L4.500 7l6.500 6" /></Ico>
      <Ico className="ml-[29px] h-[14px] w-2" box="0 0 8 14" sw={1.500}><path d="M7.500 1L1 7l6.500 6" /></Ico>
      <div className="ml-[22px] flex h-[25px] w-[137px] items-center justify-center rounded border border-[#bdbdbd] bg-white">
        <Fit className="mb-[2px] w-[38px] text-[15.500px] leading-[22px]">25/25</Fit>
      </div>
      <Ico className="ml-[21px] h-[14px] w-2 text-[#aaa]" box="0 0 8 14" sw={1.500}><path d="M.5 1L7 7 .5 13" /></Ico>
      <Ico className="ml-[31px] h-[14px] w-3 text-[#aaa]" box="0 0 12 14" sw={1.500}><path d="M1 1l6.500 6L1 13M10.500 0v14" /></Ico>
      <Fit className="ml-[23px] w-[106px] text-[15.500px]">Back to Page 24</Fit>
      <Ico className="ml-auto h-5 w-[21px] text-[#33405c]" box="0 0 21 20" sw={1.500}><path d="M1 1.500h6.500q2 0 3 1.500 1-1.500 3-1.500H20V17h-6.500l-3 2-3-2H1zM10.500 3v12.500" /></Ico>
      <Ico className="ml-[19px] h-[21px] w-[21px] text-[#33405c]" box="0 0 21 21" sw={1.500}><circle cx="10.500" cy="10.500" r="9.500" /><path d="M8 6l6.500 4.500L8 15z" /></Ico>
      <Ico className="mr-[21px] ml-[21px] h-[17px] w-[17px]" box="0 0 18 18" sw={1.500}><path d="M1 6V3a2 2 0 0 1 2-2h3M17 12v3a2 2 0 0 1-2 2h-3M11 1h6v6M17 1l-6 6M7 17H1v-6M1 17l6-6" /></Ico>
    </div>
  );
}

export default function App() {
  return (
    <div className="relative flex h-[1080px] w-[1920px] flex-col overflow-hidden bg-[#ededed] font-['Open_Sans',sans-serif] text-[#262626]">
      <div className="absolute top-0 left-[822px] h-px w-[280px] bg-[#e0e0e0]" />
      <TitleBar />
      <MenuRow />
      <Ribbon />
      <div className="flex min-h-0 flex-1">
        <LeftRail />
        <ThumbnailPanel />
        <div className="flex min-w-0 flex-1 flex-col justify-end gap-[18px] overflow-hidden pb-[38px] pl-[95px]">
          {[24, 25].map((n) => (
            <div key={n} className="h-[675px] w-[1200px] shrink-0 shadow-[0_0_2px_1px_rgba(0,0,0,0.2)]">
              <Slide page={n} />
            </div>
          ))}
        </div>
        <div className="flex w-[20px] shrink-0 flex-col items-center pt-[14px] pb-[7px]">
          <svg viewBox="0 0 7 5" className="h-[5px] w-[7px]"><path d="M0 5l3.500-5L7 5z" fill="#777" /></svg>
          <div className="mt-auto h-[55px] w-[10px] rounded-full bg-[#d0d0d0]" />
          <svg viewBox="0 0 7 5" className="mt-[13px] h-[5px] w-[7px]"><path d="M0 0l3.500 5L7 0z" fill="#777" /></svg>
        </div>
        <RightRail />
      </div>
      <StatusBar />
    </div>
  );
}
